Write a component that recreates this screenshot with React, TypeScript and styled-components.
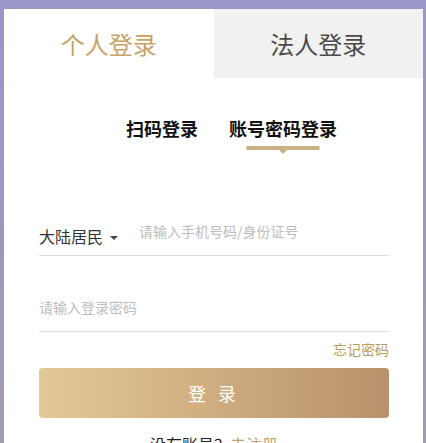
import React, { useState } from "react";
import styled, { createGlobalStyle } from "styled-components";

const Global = createGlobalStyle`
  html, body { margin: 0; padding: 0; }
  body {
    width: 426px;
    height: 443px;
    overflow: hidden;
    background: linear-gradient(180deg, #9a96c9 0%, #9c97c0 50%, #a49bb1 100%);
    font-family: "Noto Sans CJK SC", "Noto Sans", sans-serif;
  }
`;

const Card = styled.div`
  margin: 9px 3px 0 4px;
  height: 434px;
  background: #fff;
  overflow: hidden;
`;

const TabBar = styled.div`
  display: flex;
  height: 69px;
`;

const Tab = styled.div<{ $active?: boolean }>`
  flex: 1;
  display: flex;
  align-items: center;
  justify-content: center;
  font-size: 24px;
  background: ${(p) => (p.$active ? "#fff" : "#f1f1f1")};
  color: ${(p) => (p.$active ? "#c7a266" : "#4a4a4a")};
`;

const SubTabs = styled.div`
  display: flex;
  gap: 31px;
  padding: 40px 0 0 122px;
`;

const SubTab = styled.div<{ $active?: boolean }>`
  position: relative;
  font-size: 18px;
  line-height: 20px;
  font-weight: 700;
  color: #111;
  padding-bottom: 16px;
  &::after {
    content: "";
    display: ${(p) => (p.$active ? "block" : "none")};
    position: absolute;
    left: 50%;
    bottom: 0;
    width: 73px;
    height: 4px;
    transform: translateX(-50%) translateY(-4px);
    background: #c9b185;
  }
  &::before {
    content: "";
    display: ${(p) => (p.$active ? "block" : "none")};
    position: absolute;
    left: 50%;
    bottom: -4px;
    margin-left: -4px;
    border-left: 4px solid transparent;
    border-right: 4px solid transparent;
    border-top: 4px solid #c9b185;
    transform: translateY(-4px);
  }
`;

const Form = styled.div`
  display: flex;
  flex-direction: column;
  padding: 0 34px 0 35px;
  margin-top: 53px;
`;

const FieldRow = styled.div<{ $gap?: number }>`
  display: flex;
  flex-shrink: 0;
  align-items: flex-end;
  height: 48px;
  border-bottom: 1px solid #dcdcdc;
  margin-top: ${(p) => p.$gap ?? 0}px;
`;

const Region = styled.div`
  display: flex;
  align-items: center;
  gap: 7px;
  font-size: 16px;
  line-height: 20px;
  color: #333;
  padding-bottom: 9px;
  margin-right: 21px;
  white-space: nowrap;
`;

const Caret = styled.span`
  width: 0;
  height: 0;
  border-left: 4px solid transparent;
  border-right: 4px solid transparent;
  border-top: 4px solid #444;
  margin-top: 3px;
`;

const Input = styled.input`
  flex: 1;
  min-width: 0;
  height: 48px;
  border: none;
  outline: none;
  padding: 0;
  font-family: inherit;
  font-size: 14px;
  color: #333;
  background: transparent;
  &::placeholder {
    color: #bdbdbd;
  }
`;

const Forgot = styled.a`
  align-self: flex-end;
  margin-top: 7px;
  font-size: 14px;
  line-height: 20px;
  color: #b99a5f;
  text-decoration: none;
`;

const LoginButton = styled.button`
  flex-shrink: 0;
  margin-top: 9px;
  height: 50px;
  border: none;
  border-radius: 4px;
  background: linear-gradient(90deg, #e3c995 0%, #d4b283 40%, #b8916c 100%);
  color: #fff;
  font-family: inherit;
  font-size: 18px;
  letter-spacing: 4px;
  cursor: pointer;
`;

const Register = styled.div`
  margin-top: 16px;
  text-align: center;
  font-size: 16px;
  line-height: 20px;
  color: #222;
  span {
    color: #c3a46b;
  }
`;

export default function App() {
  const [tab, setTab] = useState(0);
  const [sub, setSub] = useState(1);
  return (
    <>
      <Global />
      <Card>
        <TabBar>
          <Tab $active={tab === 0} onClick={() => setTab(0)}>个人登录</Tab>
          <Tab $active={tab === 1} onClick={() => setTab(1)}>法人登录</Tab>
        </TabBar>
        <SubTabs>
          <SubTab $active={sub === 0} onClick={() => setSub(0)}>扫码登录</SubTab>
          <SubTab $active={sub === 1} onClick={() => setSub(1)}>账号密码登录</SubTab>
        </SubTabs>
        <Form>
          <FieldRow>
            <Region>
              大陆居民
              <Caret />
            </Region>
            <Input placeholder="请输入手机号码/身份证号" />
          </FieldRow>
          <FieldRow $gap={27}>
            <Input type="password" placeholder="请输入登录密码" />
          </FieldRow>
          <Forgot href="#">忘记密码</Forgot>
          <LoginButton>登 录</LoginButton>
          <Register>
            没有账号？<span>去注册</span>
          </Register>
        </Form>
      </Card>
    </>
  );
}
